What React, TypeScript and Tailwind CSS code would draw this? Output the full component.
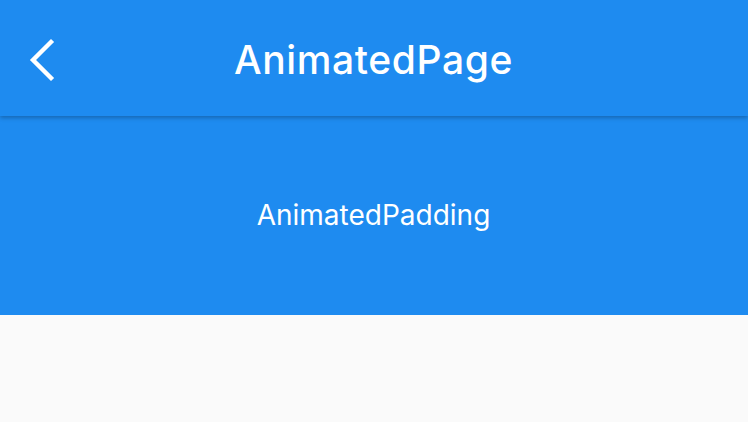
import React from 'react';

function BackChevron() {
  return (
    <svg width="28" height="44" viewBox="0 0 28 44" fill="none">
      <path d="M23 4 L5 22 L23 40" stroke="white" strokeWidth="4.4" strokeLinecap="square" strokeLinejoin="miter" />
    </svg>
  );
}

export default function App() {
  return (
    <div className="min-h-[422px] w-full bg-[#fafafa] font-['Inter',sans-serif]">
      <header className="relative z-10 flex h-[116px] items-center bg-[#1e8bf0] shadow-[0_2px_4px_rgba(0,0,0,0.25)]">
        <div className="flex w-[100px] items-center pl-[28px] pt-[4px]">
          <BackChevron />
        </div>
        <h1 className="flex-1 text-center text-[39px] font-medium leading-none tracking-[0.6px] text-white pr-[101px] pt-[2px]">
          AnimatedPage
        </h1>
      </header>
      <section className="flex h-[199px] items-start justify-center bg-[#1e8bf0] pt-[85px]">
        <span className="text-[28px] leading-none text-white pr-[1px]">AnimatedPadding</span>
      </section>
    </div>
  );
}
